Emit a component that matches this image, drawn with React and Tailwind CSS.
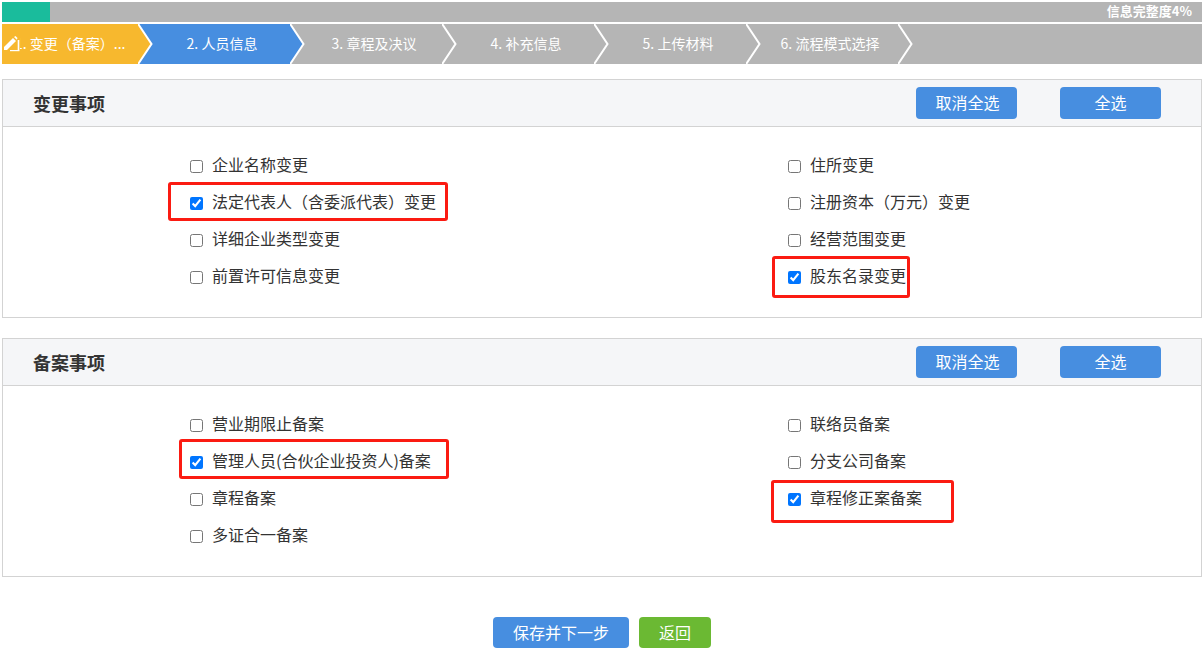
import { Fragment } from "react";

const font = "font-['Microsoft_YaHei','Noto_Sans_CJK_SC','Noto_Sans',sans-serif]";

const steps = [
  { label: "1. 变更（备案）...", color: "#f7b82e", bg: "bg-[#f7b82e]", icon: true },
  { label: "2. 人员信息", color: "#478ee0", bg: "bg-[#478ee0]" },
  { label: "3. 章程及决议", color: "#b5b5b5", bg: "bg-[#b5b5b5]" },
  { label: "4. 补充信息", color: "#b5b5b5", bg: "bg-[#b5b5b5]" },
  { label: "5. 上传材料", color: "#b5b5b5", bg: "bg-[#b5b5b5]" },
  { label: "6. 流程模式选择", color: "#b5b5b5", bg: "bg-[#b5b5b5]" },
];

const changeItems = [
  ["企业名称变更", false],
  ["住所变更", false],
  ["法定代表人（含委派代表）变更", true],
  ["注册资本（万元）变更", false],
  ["详细企业类型变更", false],
  ["经营范围变更", false],
  ["前置许可信息变更", false],
  ["股东名录变更", true],
];

const filingItems = [
  ["营业期限止备案", false],
  ["联络员备案", false],
  ["管理人员(合伙企业投资人)备案", true],
  ["分支公司备案", false],
  ["章程备案", false],
  ["章程修正案备案", true],
  ["多证合一备案", false],
];

// 截图上的红框标注
const marks = [
  "left-[168px] top-[182px] w-[280px] h-[39px]",
  "left-[772px] top-[256px] w-[138px] h-[42px]",
  "left-[179px] top-[439px] w-[270px] h-[40px]",
  "left-[771px] top-[480px] w-[183px] h-[43px]",
];

function Arrow({ color, next }) {
  return (
    <svg width="16" height="40" viewBox="0 0 16 40" className="shrink-0">
      <rect width="16" height="40" fill={next} />
      <path d="M0 0 L14 20 L0 40 Z" fill={color} />
      <path d="M-0.5 -1 L13.5 20 L-0.5 41" fill="none" stroke="#fff" strokeWidth="2" />
    </svg>
  );
}

function Section({ title, items }) {
  return (
    <section className="border border-[#d3d3d3]">
      <div className="flex h-[47px] items-center border-b border-[#d3d3d3] bg-[#f5f6f8] pl-[30px]">
        <h3 className="flex-1 text-[18px] font-bold text-[#333]">{title}</h3>
        <button className="h-8 w-[101px] rounded-sm bg-[#478ee0] pb-[2px] pl-[2px] text-white">取消全选</button>
        <button className="ml-[43px] mr-[40px] h-8 w-[101px] rounded-sm bg-[#478ee0] pb-[2px] text-white">全选</button>
      </div>
      <div className="grid h-[190px] grid-cols-[598px_1fr] content-start pl-[187px] pt-5">
        {items.map(([label, checked]) => (
          <label key={label} className="flex h-[37px] items-center gap-[9px] text-[#333]">
            <input type="checkbox" defaultChecked={checked} className="mt-[2px] h-[13px] w-[13px]" />
            <span className="pb-[4px]">{label}</span>
          </label>
        ))}
      </div>
    </section>
  );
}

export default function App() {
  return (
    <div className={`relative h-[655px] w-[1204px] overflow-hidden bg-white px-[2px] pt-[2px] text-[16px] ${font}`}>
      <div className="relative flex h-5 w-[1200px] items-center justify-end bg-[#b5b5b5] pb-[2px] pr-[10px] text-[13px] font-bold text-white">
        <div className="absolute inset-y-0 left-0 w-[48px] bg-[#1abc9c]" />
        信息完整度4%
      </div>

      <div className="mt-[2px] flex h-10 w-[1200px] bg-[#b5b5b5] text-[14px] text-white">
        {steps.map((step, i) => (
          <Fragment key={step.label}>
            <div
              className={`relative flex w-[136px] items-center pb-[2px] ${step.bg} ${step.icon ? "justify-start pl-[13px]" : "justify-center"}`}
            >
              <span className="whitespace-nowrap">{step.label}</span>
              {step.icon && (
                <svg width="18" height="18" viewBox="0 0 18 18" className="absolute left-[2px] top-[11px]">
                  <rect x="0" y="0" width="16" height="17" fill="#f7b82e" />
                  <path d="M0 12 L9 3 L12 6 L3 15 L0 15 Z" fill="#fff" />
                  <path d="M10 2 L11.5 1 L13.5 3 L12.8 4.8 Z" fill="#fff" />
                  <path d="M6 15.6 L15.5 15.6" stroke="#fff" strokeWidth="1.2" />
                  <path d="M14.5 5 L14.5 15" stroke="#fff" strokeWidth="1.6" />
                </svg>
              )}
            </div>
            <Arrow color={step.color} next={steps[i + 1]?.color ?? "#b5b5b5"} />
          </Fragment>
        ))}
      </div>

      <div className="mt-[15px] w-[1200px]">
        <Section title="变更事项" items={changeItems} />
      </div>
      <div className="mt-5 w-[1200px]">
        <Section title="备案事项" items={filingItems} />
      </div>

      <div className="mt-10 flex w-[1200px] justify-center gap-[10px]">
        <button className="h-[31px] w-[136px] rounded-sm bg-[#478ee0] pb-[2px] text-white">保存并下一步</button>
        <button className="h-[31px] w-[72px] rounded-sm bg-[#6bb933] pb-[2px] text-white">返回</button>
      </div>

      {marks.map((pos) => (
        <div key={pos} className={`pointer-events-none absolute rounded-[3px] border-[3px] border-[#fb1b12] ${pos}`} />
      ))}
    </div>
  );
}
